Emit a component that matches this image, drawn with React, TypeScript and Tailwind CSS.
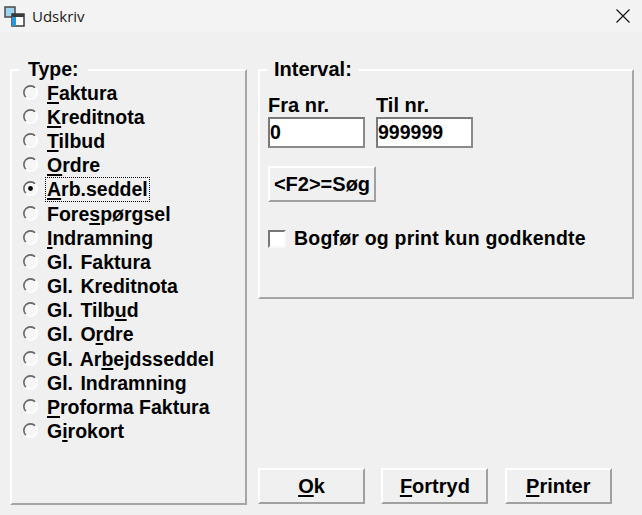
const font = { fontFamily: '"Liberation Sans", Arial, sans-serif' };

type Item = { pre: string; u: string; post: string; checked?: boolean };

const items: Item[] = [
  { pre: "", u: "F", post: "aktura" },
  { pre: "", u: "K", post: "reditnota" },
  { pre: "", u: "T", post: "ilbud" },
  { pre: "", u: "O", post: "rdre" },
  { pre: "", u: "A", post: "rb.seddel", checked: true },
  { pre: "Fore", u: "s", post: "pørgsel" },
  { pre: "", u: "I", post: "ndramning" },
  { pre: "Gl. ", u: "", post: "Faktura" },
  { pre: "Gl. ", u: "", post: "Kreditnota" },
  { pre: "Gl. Tilb", u: "u", post: "d" },
  { pre: "Gl. O", u: "r", post: "dre" },
  { pre: "Gl. Ar", u: "b", post: "ejdsseddel" },
  { pre: "Gl. ", u: "", post: "Indramning" },
  { pre: "", u: "P", post: "roforma Faktura" },
  { pre: "G", u: "i", post: "rokort" },
];

function Radio({ checked }: { checked?: boolean }) {
  return (
    <svg width="15" height="15" viewBox="0 0 15 15" className="shrink-0 mt-[-2px]">
      <circle cx="7.5" cy="7.5" r="6" fill="#f6f6f6" />
      <path d="M12.2 2.8 A6.5 6.5 0 0 0 2.8 12.2" fill="none" stroke="#666666" strokeWidth="1.6" />
      <path d="M2.8 12.2 A6.5 6.5 0 0 0 12.2 2.8" fill="none" stroke="#ffffff" strokeWidth="1.6" />
      {checked && <circle cx="7.5" cy="7.5" r="2.4" fill="#000000" />}
    </svg>
  );
}

function Mnemonic({ pre, u, post }: { pre: string; u: string; post: string }) {
  return (
    <span className="whitespace-pre">
      {pre}
      {u && <span className="underline underline-offset-2 decoration-[1.5px]">{u}</span>}
      {post}
    </span>
  );
}

function WinButton({ w, h, children }: { w: string; h: string; children: React.ReactNode }) {
  return (
    <div
      className={`${w} ${h} flex items-center justify-center bg-[#f0f0f0] border-t-2 border-l-2 border-t-white border-l-white border-r-2 border-b-2 border-r-[#a0a0a0] border-b-[#a0a0a0] text-[20px] font-bold text-black`}
    >
      {children}
    </div>
  );
}

function Field({ label, value }: { label: string; value: string }) {
  return (
    <div className="flex flex-col w-[97px]">
      <span className="text-[20px] font-bold leading-[21px] text-black">{label}</span>
      <div className="h-[31px] mt-[1px] bg-white border-2 border-t-[#7a7a7a] border-l-[#7a7a7a] border-r-[#8a8a8a] border-b-[#8a8a8a] flex items-center text-[19.5px] font-bold text-black">
        {value}
      </div>
    </div>
  );
}

export default function App() {
  return (
    <div className="w-[642px] h-[515px] bg-[#f0f0f0] flex flex-col overflow-hidden" style={font}>
      <div className="h-[32px] flex items-center bg-[#f3f3f3] shrink-0">
        <svg width="22" height="22" viewBox="0 0 22 22" className="ml-[3px] mt-[-1px]">
          <rect x="2" y="2" width="10" height="10" fill="#9fd4ee" stroke="#4a4a4a" strokeWidth="1.5" />
          <rect x="9" y="9" width="12" height="12" fill="#ffffff" stroke="#3a3a3a" strokeWidth="1.5" />
          <rect x="9" y="9" width="4" height="12" fill="#1e9be0" />
          <rect x="9" y="9" width="12" height="3" fill="#3a3a3a" />
        </svg>
        <span className="ml-[7px] text-[15px] text-[#1a1a1a]" style={{ fontFamily: '"Open Sans", sans-serif' }}>
          Udskriv
        </span>
        <svg width="16" height="16" viewBox="0 0 16 16" className="ml-auto mr-[11px]">
          <path d="M1.5 1.5 L14.5 14.5 M14.5 1.5 L1.5 14.5" stroke="#1a1a1a" strokeWidth="1.3" fill="none" />
        </svg>
      </div>

      <div className="flex gap-[11px] pl-[10px] pr-[8px] pt-[37px] flex-1 min-h-0">
        <div className="relative w-[237px] h-[436px] border-t-2 border-l-2 border-t-white border-l-white border-r-2 border-b-2 border-r-[#a6a6a6] border-b-[#a6a6a6] pt-[10px] pl-[11px]">
          <span className="absolute left-[7px] top-[-14px] bg-[#f0f0f0] px-[9px] text-[19.5px] font-bold leading-[24px] text-black">
            Type:
          </span>
          <div className="flex flex-col">
            {items.map((it, i) => (
              <div key={i} className="flex items-center h-[24.2px]">
                <Radio checked={it.checked} />
                <span
                  className={`ml-[9px] text-[19.5px] font-bold leading-[21px] text-black ${
                    it.checked ? "outline-1 outline-dotted outline-black outline-offset-1" : ""
                  } ${it.pre.startsWith("Gl.") ? "[word-spacing:2px]" : ""}`}
                >
                  <Mnemonic pre={it.pre} u={it.u} post={it.post} />
                </span>
              </div>
            ))}
          </div>
        </div>

        <div className="flex flex-col flex-1 min-w-0">
          <div className="relative h-[230px] border-t-2 border-l-2 border-t-white border-l-white border-r-2 border-b-2 border-r-[#a6a6a6] border-b-[#a6a6a6] pl-[8px] pt-[24px]">
            <span className="absolute left-[7px] top-[-14px] bg-[#f0f0f0] px-[7px] text-[20px] font-bold leading-[24px] text-black">
              Interval:
            </span>
            <div className="flex gap-[11px]">
              <Field label="Fra nr." value="0" />
              <Field label="Til nr." value="999999" />
            </div>
            <div className="mt-[18px]">
              <WinButton w="w-[108px]" h="h-[36px]">
                {"<F2>=Søg"}
              </WinButton>
            </div>
            <div className="flex items-center mt-[22px]">
              <div className="w-[18px] h-[18px] bg-white border-2 border-t-[#777777] border-l-[#777777] border-r-[#f8f8f8] border-b-[#f8f8f8]" />
              <span className="ml-[8px] text-[19.5px] tracking-[0.2px] font-bold text-black">
                Bogfør og print kun godkendte
              </span>
            </div>
          </div>
          <div className="flex gap-[16.4px] mt-[169px]">
            <WinButton w="w-[107px]" h="h-[36px]">
              <Mnemonic pre="" u="O" post="k" />
            </WinButton>
            <WinButton w="w-[107px]" h="h-[36px]">
              <Mnemonic pre="" u="F" post="ortryd" />
            </WinButton>
            <WinButton w="w-[107px]" h="h-[36px]">
              <Mnemonic pre="" u="P" post="rinter" />
            </WinButton>
          </div>
        </div>
      </div>
    </div>
  );
}
